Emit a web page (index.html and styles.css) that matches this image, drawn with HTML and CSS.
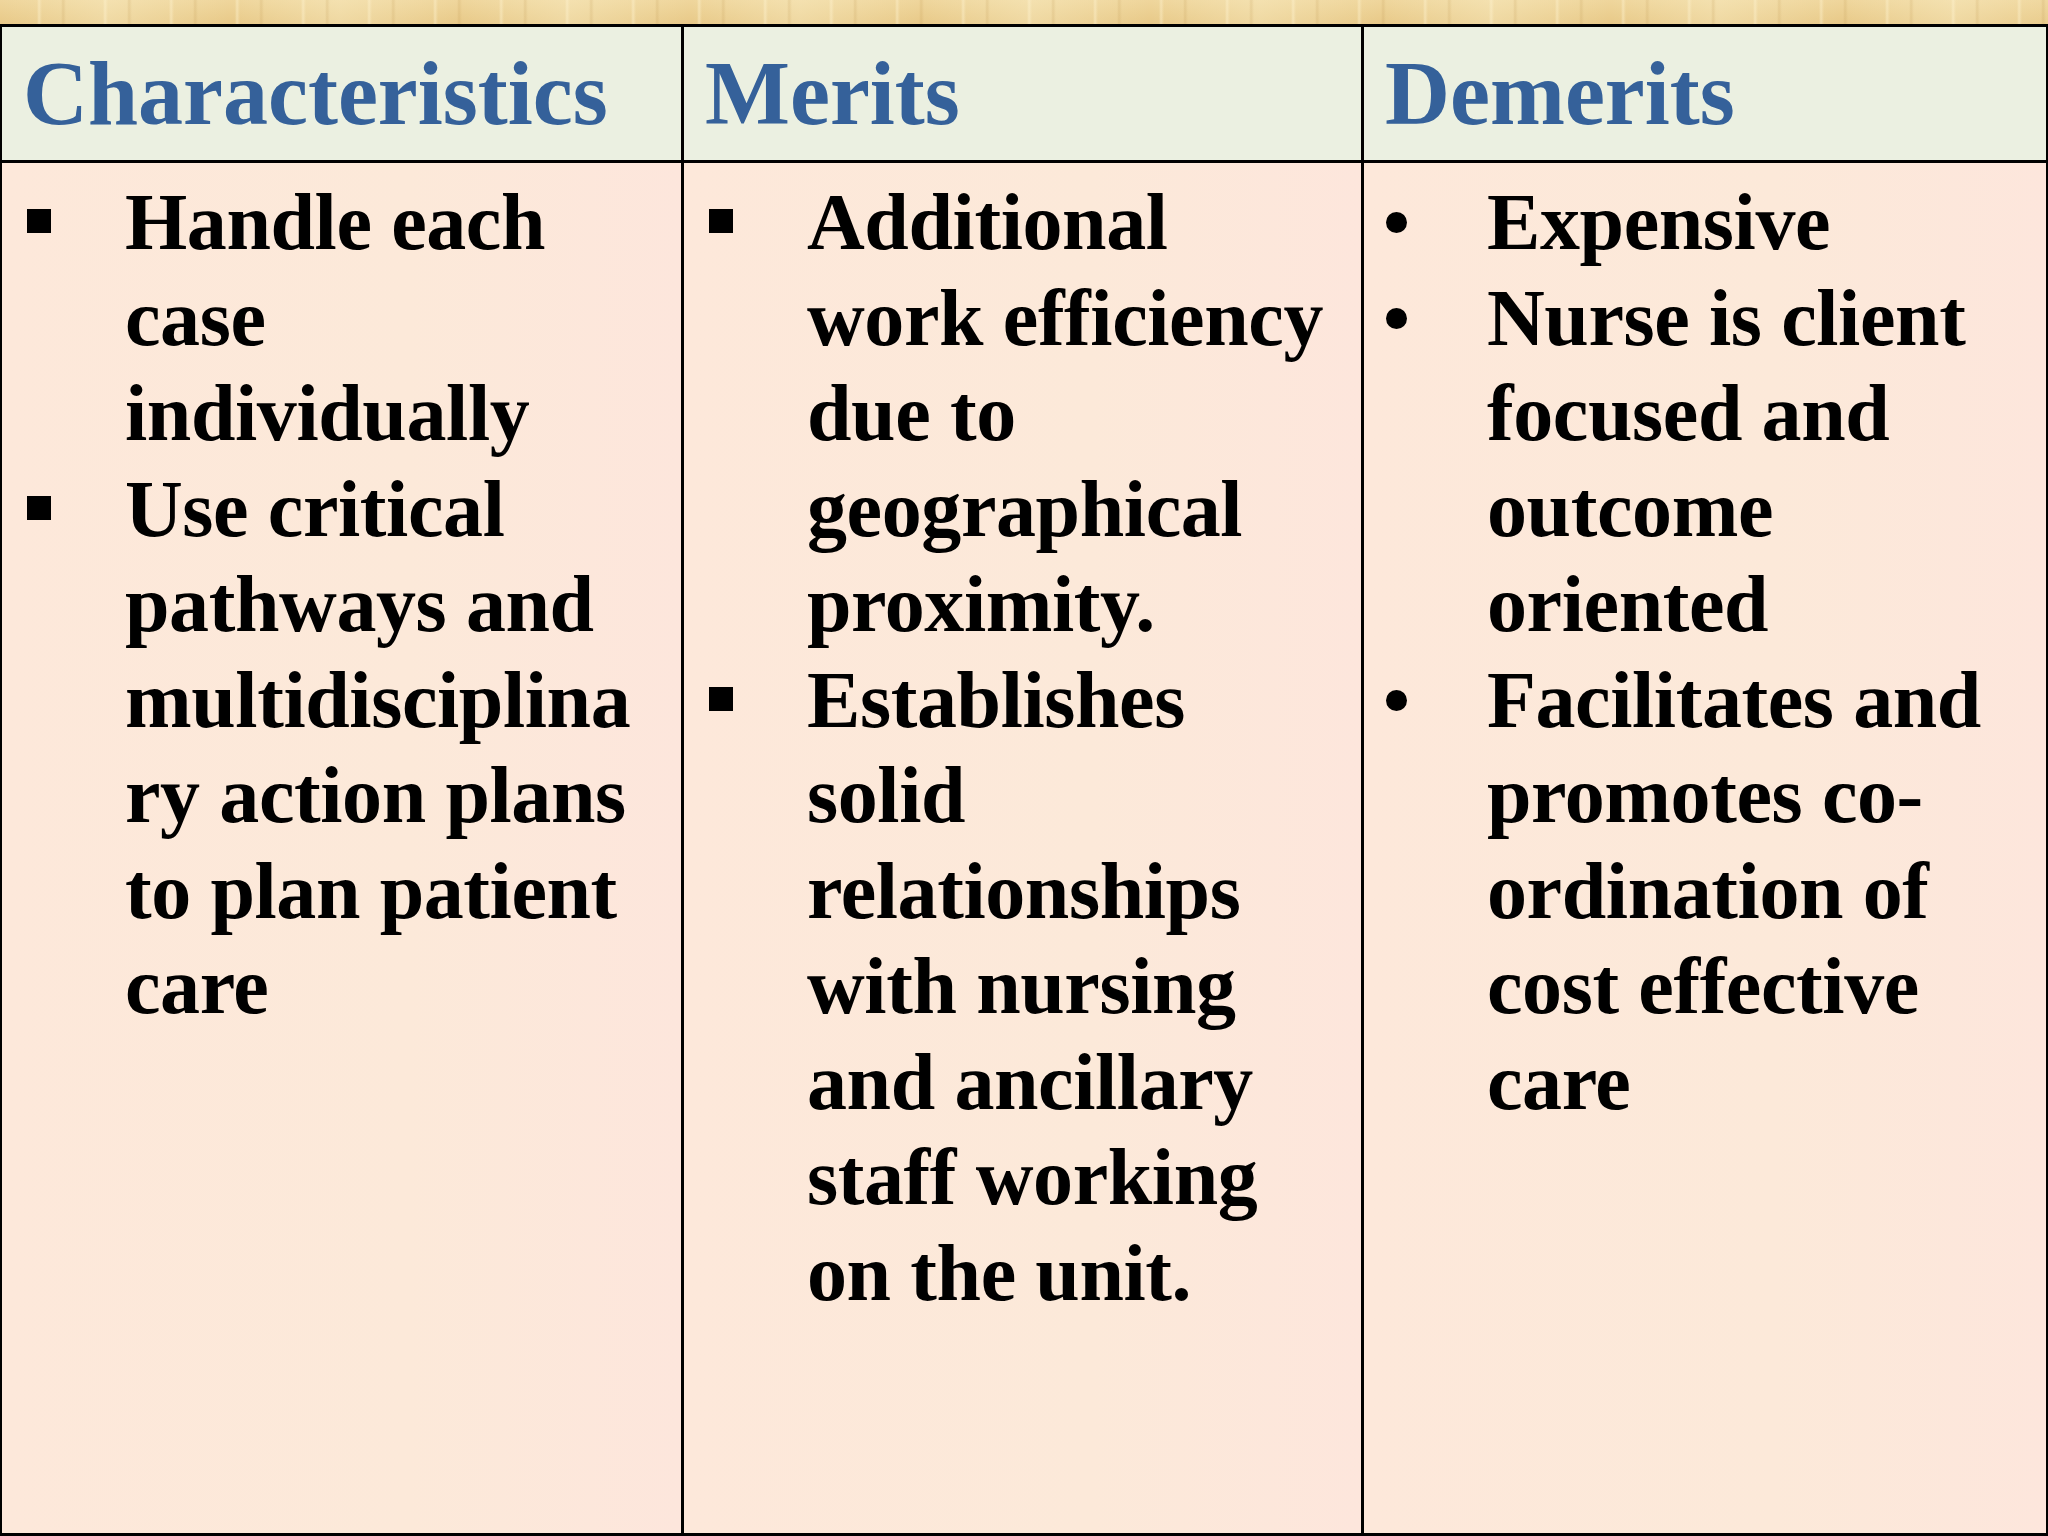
FILE: index.html
```html
<!DOCTYPE html>
<html>
<head>
<meta charset="utf-8">
<link rel="stylesheet" href="styles.css">
</head>
<body>
<div class="slide">
  <div class="band"></div>
  <div class="table">
    <div class="head">Characteristics</div>
    <div class="head">Merits</div>
    <div class="head">Demerits</div>

    <div class="cell">
      <div class="item"><span class="mark"><span class="sq"></span></span><span class="txt">Handle each<br>case<br>individually</span></div>
      <div class="item"><span class="mark"><span class="sq"></span></span><span class="txt">Use critical<br>pathways and<br>multidisciplina<br>ry action plans<br>to plan patient<br>care</span></div>
    </div>
    <div class="cell">
      <div class="item"><span class="mark"><span class="sq"></span></span><span class="txt">Additional<br>work efficiency<br>due to<br>geographical<br>proximity.</span></div>
      <div class="item"><span class="mark"><span class="sq"></span></span><span class="txt">Establishes<br>solid<br>relationships<br>with nursing<br>and ancillary<br>staff working<br>on the unit.</span></div>
    </div>
    <div class="cell">
      <div class="item"><span class="mark"><span class="dot"></span></span><span class="txt">Expensive</span></div>
      <div class="item"><span class="mark"><span class="dot"></span></span><span class="txt">Nurse is client<br>focused and<br>outcome<br>oriented</span></div>
      <div class="item"><span class="mark"><span class="dot"></span></span><span class="txt">Facilitates and<br>promotes co-<br>ordination of<br>cost effective<br>care</span></div>
    </div>
  </div>
</div>
</body>
</html>
```

FILE: styles.css
```css
html, body {
  margin: 0;
  padding: 0;
}
body {
  width: 2048px;
  height: 1536px;
  overflow: hidden;
  background: #fde8da;
}
.slide {
  width: 2048px;
  height: 1536px;
  display: flex;
  flex-direction: column;
}
.band {
  height: 24px;
  flex: none;
  background:
    repeating-linear-gradient(90deg, rgba(255,240,200,0) 0px, rgba(255,240,200,0) 37px, rgba(255,244,210,0.45) 39px, rgba(255,240,200,0) 42px, rgba(190,150,80,0) 61px, rgba(190,150,80,0.2) 63px, rgba(190,150,80,0) 66px),
    repeating-linear-gradient(90deg, rgba(255,250,220,0) 0px, rgba(255,250,220,0.3) 110px, rgba(255,250,220,0) 230px),
    linear-gradient(180deg, #efd69c 0%, #e8c988 100%);
}
.table {
  flex: 1;
  display: grid;
  grid-template-columns: 679px 680px 1fr;
  grid-template-rows: 136px 1fr;
  border-top: 3px solid #000;
  border-left: 2px solid #000;
  border-right: 2px solid #000;
  border-bottom: 3px solid #000;
  font-family: "Liberation Serif", "Times New Roman", serif;
  font-weight: bold;
}
.head {
  background: #ebf0e1;
  color: #35619a;
  font-size: 90px;
  line-height: 133px;
  padding-left: 21px;
  border-bottom: 3px solid #000;
  white-space: nowrap;
  overflow: hidden;
}
.head + .head,
.cell + .cell {
  border-left: 3px solid #000;
}
.cell {
  background: linear-gradient(90deg, #fde8da 0%, #fce9d9 60%, #fde6dc 100%);
  padding-top: 12px;
  color: #000;
  font-size: 80px;
  line-height: 95.5px;
  letter-spacing: -0.4px;
}
.item {
  display: flex;
}
.mark {
  flex: none;
  width: 123px;
  height: 95.5px;
  position: relative;
}
.sq {
  position: absolute;
  left: 25px;
  top: 34px;
  width: 24px;
  height: 24px;
  background: #000;
}
.dot {
  position: absolute;
  left: 22px;
  top: 37px;
  width: 21px;
  height: 21px;
  border-radius: 50%;
  background: #000;
}
.txt {
  white-space: nowrap;
}
```
